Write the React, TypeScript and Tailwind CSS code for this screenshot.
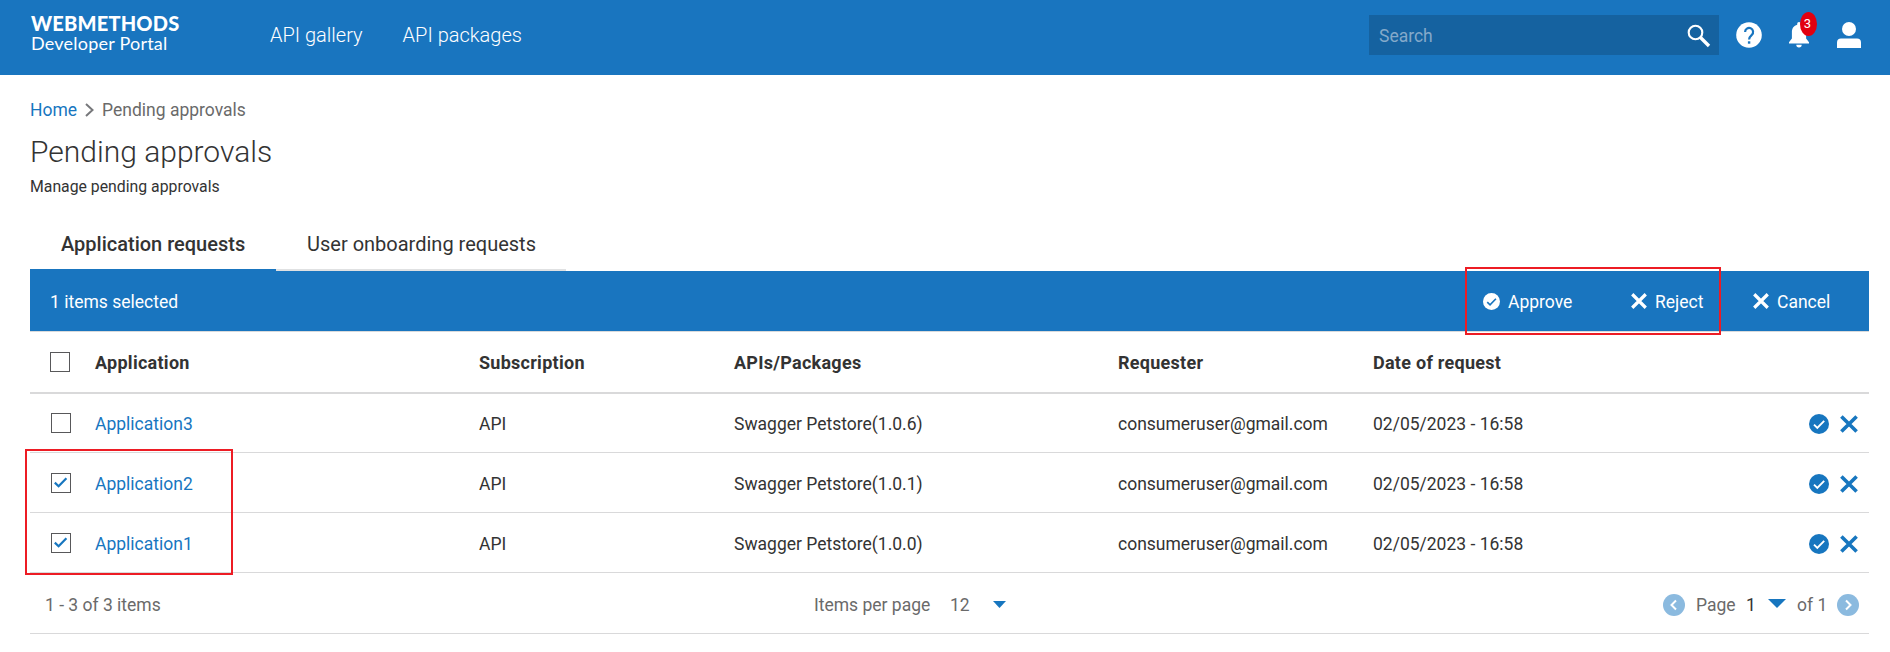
import React from "react";

const rows = [
  { name: "Application3", version: "1.0.6", checked: false },
  { name: "Application2", version: "1.0.1", checked: true },
  { name: "Application1", version: "1.0.0", checked: true },
];

function Cross({ className, weight = 3.6 }: { className: string; weight?: number }) {
  return (
    <svg viewBox="0 0 18 18" className={className} fill="none" stroke="currentColor" strokeWidth={weight}>
      <path d="M1.4 1.4 16.6 16.6M16.6 1.4 1.4 16.6" />
    </svg>
  );
}

function CheckCircle({ className, mark }: { className: string; mark: string }) {
  return (
    <svg viewBox="0 0 20 20" className={className}>
      <circle cx="10" cy="10" r="10" fill="currentColor" />
      <path d="M5 10.7 8.3 14 15.2 6.8" fill="none" stroke={mark} strokeWidth="1.9" />
    </svg>
  );
}

function Checkbox({ checked }: { checked: boolean }) {
  return (
    <span className="flex h-5 w-5 items-center justify-center border border-[#58585a]">
      {checked && (
        <svg viewBox="0 0 18 18" className="h-[18px] w-[18px]" fill="none" stroke="#1776bf" strokeWidth="2.2">
          <path d="M2.8 8.6 6.6 12.2 14.4 4.2" />
        </svg>
      )}
    </span>
  );
}

function Caret({ className }: { className: string }) {
  return (
    <svg viewBox="0 0 18 9" preserveAspectRatio="none" className={className} fill="#1776bf">
      <path d="M0 0H18L9 9Z" />
    </svg>
  );
}

function PageButton({ d }: { d: string }) {
  return (
    <svg viewBox="0 0 22 22" className="h-[22px] w-[22px] shrink-0">
      <circle cx="11" cy="11" r="11" fill="#8bbadf" />
      <path d={d} fill="none" stroke="#fff" strokeWidth="2" />
    </svg>
  );
}

const columns = "grid grid-cols-[65px_384px_255px_384px_255px_1fr_60px] items-center";

export default function App() {
  return (
    <div className="relative h-[652px] w-[1890px] overflow-hidden bg-white font-['Roboto',sans-serif] text-[17.5px] text-[#333]">
      <header className="flex h-[75px] bg-[#1975bf] text-white">
        <div className="w-[270px] pt-[13px] pl-[31px] font-['Lato',sans-serif] leading-5 whitespace-nowrap">
          <div className="text-[20px] font-black tracking-[0.2px]">WEBMETHODS</div>
          <div className="text-[18px] tracking-[0.22px]">Developer Portal</div>
        </div>
        <nav className="flex h-[70px] items-center gap-10 text-[20px] font-light">
          <a>API gallery</a>
          <a>API packages</a>
        </nav>
        <div className="mt-[15px] ml-auto flex h-10 w-[350px] items-center justify-between bg-[#1562a0] pr-2 pl-[10px]">
          <span className="pt-0.5 text-[#84a9ca]">Search</span>
          <svg viewBox="0 0 24 24" className="mt-0.5 h-6 w-6" fill="none" stroke="#fff">
            <circle cx="8.5" cy="8.5" r="6.8" strokeWidth="2.1" />
            <path d="M13.5 13.5 22 22" strokeWidth="3.4" />
          </svg>
        </div>
        <div className="flex h-[70px] w-[171px] items-center pl-[17px]">
          <svg viewBox="0 0 26 26" className="h-[26px] w-[26px]">
            <circle cx="13" cy="13" r="12.8" fill="#fff" />
            <path d="M9.1 10a4 4 0 1 1 6.700 2.900C14 14.500 13.100 15.200 13.100 17.600" fill="none" stroke="#1975bf" strokeWidth="2.2" />
            <path d="M11.9 19.3h2.400v2.400h-2.400z" fill="#1975bf" />
          </svg>
          <span className="relative ml-[27px] h-[26px] w-5">
            <svg viewBox="0 0 20 26" className="h-[26px] w-5" fill="#fff">
              <path d="M10 0a1.800 1.800 0 0 0-1.800 1.800v1C4.900 3.600 2.900 6.500 2.900 10v6.500L0 20.300V21.400H20V20.300L17.100 16.500V10c0-3.500-2-6.400-5.300-7.200v-1A1.800 1.800 0 0 0 10 0ZM7.300 22.700a2.700 2.700 0 0 0 5.400 0Z" />
            </svg>
            <span className="absolute -top-[10px] left-[11px] flex h-6 w-[17px] items-center justify-center rounded-[50%] bg-[#e2000f] pr-0.5 text-[13px]">3</span>
          </span>
          <svg viewBox="0 0 24 26" className="ml-7 h-[26px] w-6" fill="#fff">
            <circle cx="12" cy="7" r="7" />
            <path d="M0 26v-5.500C0 18 1.500 16.600 4 16.600H20c2.500 0 4 1.400 4 3.900V26Z" />
          </svg>
        </div>
      </header>

      <main className="pr-[21px] pl-[30px]">
        <div className="mt-[23px] flex h-6 items-center text-[#6a6a6a]">
          <a className="text-[#1776bf]">Home</a>
          <svg viewBox="0 0 9 14" className="mx-2 h-[14px] w-[9px]" fill="none" stroke="#77787b" strokeWidth="2">
            <path d="M1 1 7.500 7 1 13" />
          </svg>
          <span>Pending approvals</span>
        </div>
        <h1 className="mt-3 h-9 text-[30px] leading-9 font-light">Pending approvals</h1>
        <p className="mt-[5px] text-[15.8px] leading-6">Manage pending approvals</p>

        <div className="mt-6 flex h-[48px] text-[20px]">
          <div className="w-[246px] border-b-2 border-[#1975bf] pl-[31px] leading-[42px] font-medium">Application requests</div>
          <div className="w-[290px] border-b-2 border-[#e0e1e2] pl-[31px] leading-[42px]">User onboarding requests</div>
        </div>

        <div className="flex h-[60px] items-center bg-[#1975bf] pl-5 text-white">
          <span className="pt-0.5">1 items selected</span>
          <span className="ml-auto flex w-[148px] items-center gap-2">
            <CheckCircle className="h-[17px] w-[17px]" mark="#1975bf" />
            <span className="pt-0.5">Approve</span>
          </span>
          <span className="flex w-[122px] items-center gap-2">
            <Cross className="h-4 w-4" />
            <span className="pt-0.5">Reject</span>
          </span>
          <span className="flex w-[116px] items-center gap-2">
            <Cross className="h-4 w-4" />
            <span className="pt-0.5">Cancel</span>
          </span>
        </div>

        <div className={`${columns} h-[63px] border-t border-b-2 border-t-[#d9dadb] border-b-[#d9d9da] text-[18px] font-bold tracking-[0.27px]`}>
          <span className="pb-px pl-5"><Checkbox checked={false} /></span>
          <span>Application</span>
          <span>Subscription</span>
          <span>APIs/Packages</span>
          <span>Requester</span>
          <span>Date of request</span>
        </div>

        {rows.map((row, i) => (
          <div key={row.name} className={`${columns} border-b border-[#d9d9da] ${i === 0 ? "h-[59px]" : "h-[60px] pt-px"}`}>
            <span className="pl-[21px]"><Checkbox checked={row.checked} /></span>
            <a className="pt-0.5 text-[#1776bf]">{row.name}</a>
            <span className="pt-0.5">API</span>
            <span className="pt-0.5">Swagger Petstore({row.version})</span>
            <span className="pt-0.5">consumeruser@gmail.com</span>
            <span className="pt-0.5">02/05/2023 - 16:58</span>
            <span className="flex items-center gap-[11px] pt-px text-[#1776bf]">
              <CheckCircle className="h-5 w-5" mark="#fff" />
              <Cross className="h-[18px] w-[18px]" weight={3.6} />
            </span>
          </div>
        ))}

        <div className="flex h-[61px] items-center border-b border-[#d9d9da] pt-[3px] pl-[15px] text-[#6a6a6a]">
          <span className="w-[769px] pt-0.5">1 - 3 of 3 items</span>
          <span className="w-[136px] pt-0.5">Items per page</span>
          <span className="w-[43px] pt-0.5">12</span>
          <Caret className="h-[7px] w-[13px]" />
          <div className="ml-auto flex items-center pr-[10px]">
            <PageButton d="M13 6.500 8.500 11 13 15.500" />
            <span className="ml-[11px] w-[50px] pt-0.5">Page</span>
            <span className="w-[22px] pt-0.5 text-[#333]">1</span>
            <Caret className="-mt-0.5 h-[9px] w-[18px]" />
            <span className="ml-[11px] w-10 pt-0.5">of 1</span>
            <PageButton d="M9 6.500 13.500 11 9 15.500" />
          </div>
        </div>
      </main>

      <div className="absolute top-[267px] left-[1465px] h-[68px] w-[256px] border-2 border-[#ed1c24]" />
      <div className="absolute top-[449px] left-[25px] h-[126px] w-[208px] border-2 border-[#ed1c24]" />
    </div>
  );
}
